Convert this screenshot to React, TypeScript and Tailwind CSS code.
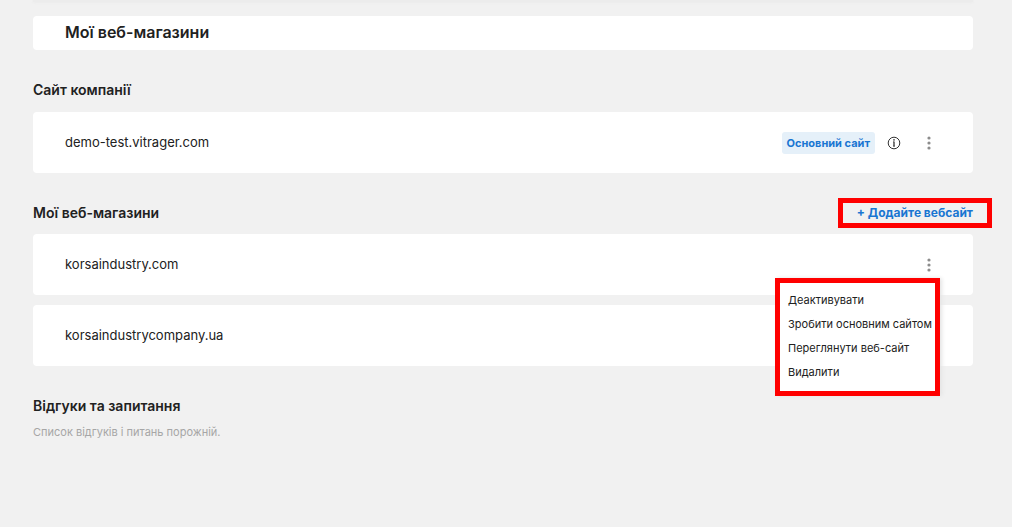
import React, { useState } from 'react';

const mainSites = ['demo-test.vitrager.com'];
const shops = ['korsaindustry.com', 'korsaindustrycompany.ua'];
const actions = ['Деактивувати', 'Зробити основним сайтом', 'Переглянути веб-сайт', 'Видалити'];

const DotsIcon: React.FC = () => (
  <svg width="4" height="14" viewBox="0 0 4 14" fill="#8c8c8c" aria-hidden="true">
    <circle cx="2" cy="2" r="1.6" />
    <circle cx="2" cy="7" r="1.6" />
    <circle cx="2" cy="12" r="1.6" />
  </svg>
);

const InfoIcon: React.FC = () => (
  <svg width="14" height="14" viewBox="0 0 14 14" fill="none" stroke="#333333" aria-hidden="true">
    <circle cx="7" cy="7" r="5.8" strokeWidth="1" />
    <path d="M7 5.6V10.4" strokeWidth="1.3" />
    <path d="M6 5.9H7M6 10.1H8" strokeWidth="0.6" />
    <circle cx="7" cy="3.9" r="0.8" fill="#333333" stroke="none" />
  </svg>
);

const SiteCard: React.FC<{ name: string; children?: React.ReactNode }> = ({ name, children }) => (
  <div className="flex items-center justify-between rounded bg-white px-8 py-5">
    <a href="#" className="text-[13px] leading-[21px] text-[#212121]">{name}</a>
    <div className="flex items-center">{children}</div>
  </div>
);

const App: React.FC = () => {
  const [openMenu, setOpenMenu] = useState<string | null>('korsaindustry.com');

  return (
    <div className="min-h-screen bg-[#f1f1f1] pr-[39px] pl-[33px] font-['Inter','Noto_Sans',sans-serif] text-[#212121]">
      {/* Bottom edge of the panel above */}
      <div className="h-[2px] bg-[#ececec] shadow-[0_0_3px_#e6e6e6]" />

      <h1 className="mt-3.5 rounded bg-white px-8 pt-1 pb-1.5 text-base leading-6 font-semibold">Мої веб-магазини</h1>

      <section className="mt-7">
        <h2 className="mb-2.5 text-sm leading-6 font-semibold">Сайт компанії</h2>
        {mainSites.map((site) => (
          <SiteCard key={site} name={site}>
            <span className="-my-px rounded-[3px] bg-[#e5f0f9] px-[5px] py-px text-[11px] leading-5 font-bold text-[#1976d2]">
              Основний сайт
            </span>
            <button type="button" aria-label="Інформація" className="ml-3">
              <InfoIcon />
            </button>
            <button type="button" aria-label="Дії" className="ml-4 flex w-6 justify-center">
              <DotsIcon />
            </button>
          </SiteCard>
        ))}
      </section>

      <section className="mt-7">
        <div className="mb-[9px] flex items-center justify-between">
          <h2 className="text-sm leading-6 font-semibold">Мої веб-магазини</h2>
          <button
            type="button"
            className="-my-[3px] -mr-[19px] min-w-[154px] border-[5px] border-[#ff0000] pr-3.5 text-right text-xs leading-5 font-bold text-[#1976d2]"
          >
            + Додайте вебсайт
          </button>
        </div>
        <div className="space-y-2.5">
          {shops.map((shop) => (
            <div key={shop} className="relative">
              <SiteCard name={shop}>
                <button
                  type="button"
                  aria-label="Дії"
                  className="flex w-6 justify-center"
                  onClick={() => setOpenMenu(openMenu === shop ? null : shop)}
                >
                  <DotsIcon />
                </button>
              </SiteCard>
              {openMenu === shop && (
                <ul className="absolute top-11 right-[33px] z-10 w-[165px] border-[5px] border-[#ff0000] bg-white pt-[5px] pb-[7px] pl-2 shadow-[2px_0_4px_#e4e4e4]">
                  {actions.map((action) => (
                    <li key={action}>
                      <button type="button" className="block text-[11px] leading-6 whitespace-nowrap">{action}</button>
                    </li>
                  ))}
                </ul>
              )}
            </div>
          ))}
        </div>
      </section>

      <section className="mt-7">
        <h2 className="text-sm leading-6 font-semibold">Відгуки та запитання</h2>
        <p className="mt-1 text-[11px] leading-5 text-[#a6a6a6]">Список відгуків і питань порожній.</p>
      </section>
    </div>
  );
};

export default App;
